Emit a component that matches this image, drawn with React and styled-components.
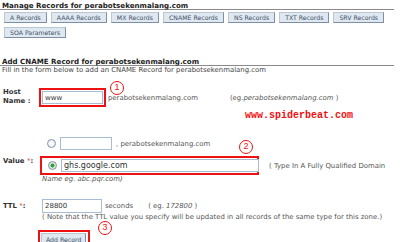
import React from 'react';
import styled, { createGlobalStyle } from 'styled-components';

const GlobalStyle = createGlobalStyle`
  body {
    margin: 0;
    background: #ffffff;
    font-family: "DejaVu Sans", Verdana, sans-serif;
    font-size: 6.9px;
    color: #444444;
  }
`;

const Page = styled.div`
  position: relative;
  width: 400px;
  height: 242px;
  overflow: hidden;
`;

const Heading = styled.div`
  width: 392px;
  padding: 2px 0 0 2px;
  height: 7px;
  box-sizing: content-box;
  border-bottom: 1px solid #8a8a8a;
  font-weight: bold;
  font-size: 7.1px;
  line-height: 7px;
  color: #222222;
`;

const ButtonBar = styled.div`
  display: flex;
  flex-wrap: wrap;
  gap: 4px 4px;
  width: 390px;
  padding: 2px 0 0 4px;
`;

const TabButton = styled.button`
  height: 11px;
  padding: 0 5px;
  font-family: inherit;
  font-size: 6.2px;
  line-height: 9px;
  color: #3d4f66;
  background: #dfe8f1;
  border: 1px solid #b9c6d4;
  border-right-color: #7f8fa3;
  border-bottom-color: #7f8fa3;
  border-radius: 0;
`;

const Section = styled.div`
  margin-top: 18px;
`;

const Intro = styled.div`
  padding: 1px 0 0 2px;
  line-height: 7px;
`;

const Form = styled.div`
  display: grid;
  grid-template-columns: 38px 1fr;
  padding-left: 3px;
`;

const Label = styled.div`
  font-weight: bold;
  color: #333333;
  line-height: 9px;
  padding-top: ${p => p.top || 0}px;
`;

const Star = styled.span`
  color: #e04040;
  font-weight: normal;
`;

const Field = styled.div`
  display: flex;
  align-items: center;
  gap: ${p => p.gap || 0}px;
  margin-left: ${p => p.indent || 0}px;
`;

const Mark = styled.div`
  display: inline-flex;
  align-items: center;
  border: 2px solid #ee1111;
  padding: 1px;
  width: ${p => p.w}px;
  box-sizing: border-box;
`;

const TextBox = styled.input.attrs({ type: 'text', readOnly: true })`
  box-sizing: border-box;
  width: ${p => p.w}px;
  height: ${p => p.h || 13}px;
  padding: 0 2px;
  margin: 0;
  font-family: inherit;
  font-size: ${p => p.fs || 7}px;
  color: #333333;
  background: #ffffff;
  border: 1px solid #a9bdd2;
  outline: none;
`;

const Radio = styled.span`
  display: inline-block;
  width: 7px;
  height: 7px;
  border-radius: 50%;
  border: 1px solid #8293a8;
  background: radial-gradient(circle, ${p => (p.checked ? '#2e9d3a 0 1.8px, #d6e6d6 2.2px' : '#ffffff 0, #e4e9ef 100%')});
  flex-shrink: 0;
`;

const Hint = styled.span`
  color: #555555;
  white-space: nowrap;
  font-style: ${p => (p.italic ? 'italic' : 'normal')};
`;

const Gap = styled.div`
  grid-column: 1 / 3;
  height: ${p => p.h}px;
`;

const Note = styled.div`
  grid-column: 2;
  color: #555555;
  line-height: 8px;
  white-space: nowrap;
  margin-left: ${p => p.indent || 0}px;
`;

const SubmitButton = styled.button`
  height: 12px;
  padding: 0 4px;
  font-family: inherit;
  font-size: 6.2px;
  color: #3d4f66;
  background: #dfe8f1;
  border: 1px solid #b9c6d4;
  border-right-color: #7f8fa3;
  border-bottom-color: #7f8fa3;
`;

const Watermark = styled.div`
  position: absolute;
  left: 245px;
  top: 110px;
  font-family: "Liberation Mono", "Courier New", monospace;
  font-weight: bold;
  font-size: 10px;
  color: #ee1111;
`;

const Badge = styled.div`
  position: absolute;
  left: ${p => p.x - 7}px;
  top: ${p => p.y - 7}px;
  width: 14px;
  height: 14px;
  box-sizing: border-box;
  border: 1.5px solid #ee1111;
  border-radius: 50%;
  background: #ffffff;
  color: #ee1111;
  font-family: "Liberation Sans", Arial, sans-serif;
  font-size: 9px;
  line-height: 11px;
  text-align: center;
`;

const tabs = ['A Records', 'AAAA Records', 'MX Records', 'CNAME Records', 'NS Records', 'TXT Records', 'SRV Records', 'SOA Parameters'];

export default function App() {
  return (
    <Page>
      <GlobalStyle />
      <Heading>Manage Records for perabotsekenmalang.com</Heading>
      <ButtonBar>
        {tabs.map(t => <TabButton key={t}>{t}</TabButton>)}
      </ButtonBar>

      <Section>
        <Heading>Add CNAME Record for perabotsekenmalang.com</Heading>
        <Intro>Fill in the form below to add an CNAME Record for perabotsekenmalang.com</Intro>

        <Form>
          <Gap h={14} />
          <Label>Host<br />Name :</Label>
          <Field indent={-2} gap={2}>
            <Mark w={67}><TextBox w={61} defaultValue="www" /></Mark>
            <Hint>perabotsekenmalang.com</Hint>
            <Hint style={{ marginLeft: 30 }}>(eg.<i>perabotsekenmalang.com</i> )</Hint>
          </Field>

          <Gap h={30} />
          <div />
          <Field indent={6} gap={4}>
            <Radio />
            <TextBox w={52} />
            <Hint>, perabotsekenmalang.com</Hint>
          </Field>
          <Gap h={6} />
          <Label top={1}>Value <Star>*</Star>:</Label>
          <Field indent={-1} gap={10}>
            <Mark w={219}>
              <Field indent={5} gap={4}>
                <Radio checked />
                <TextBox w={198} fs={8} defaultValue="ghs.google.com" />
              </Field>
            </Mark>
            <Hint>( Type In A Fully Qualified Domain</Hint>
          </Field>
          <Note indent={1}><Hint italic>Name eg. abc.pqr.com)</Hint></Note>

          <Gap h={16} />
          <Label top={3}>TTL <Star>*</Star>:</Label>
          <Field indent={1} gap={3}>
            <TextBox w={60} h={14} defaultValue="28800" />
            <Hint>seconds</Hint>
            <Hint style={{ marginLeft: 12 }}>( eg. <i>172800</i> )</Hint>
          </Field>
          <Note indent={1}>( Note that the TTL value you specify will be updated in all records of the same type for this zone.)</Note>
          <Gap h={9} />
          <div />
          <Field indent={-3}>
            <Mark w={52}><SubmitButton>Add Record</SubmitButton></Mark>
          </Field>
        </Form>
      </Section>

      <Watermark>www.spiderbeat.com</Watermark>
      <Badge x={117} y={88}>1</Badge>
      <Badge x={246} y={147}>2</Badge>
      <Badge x={105} y={228}>3</Badge>
    </Page>
  );
}
